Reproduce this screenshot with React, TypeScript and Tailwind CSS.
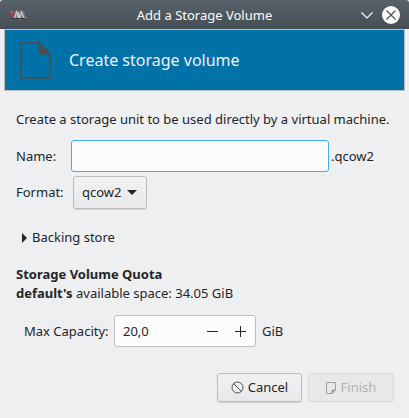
import { useState } from "react";

function AppLogo() {
  return (
    <svg className="h-3 w-5" viewBox="0 0 20 12" fill="none" aria-hidden="true">
      <path d="M2 2H16L18 9H4Z" fill="#85888a" opacity="0.6" />
      <path d="M1 2.5L4 8.5L7 2.5" stroke="#963b50" strokeWidth="2" />
      <path d="M6.5 9L8.5 3L10.5 9M10 3L12 9L13.5 3L16 9" stroke="#c5c4c4" strokeWidth="1.4" />
      <path d="M3 9.5H19" stroke="#35383b" strokeWidth="1" />
      <path d="M17 9H19" stroke="#9a9c9e" strokeWidth="1" />
    </svg>
  );
}

function TitleBar() {
  return (
    <header className="grid h-[29px] grid-cols-[1fr_auto_1fr] items-center rounded-t-[3px] bg-linear-to-b from-[#58626a] to-[#464e55] px-2 text-[#fcfcfc]">
      <AppLogo />
      <h1 className="leading-5">Add a Storage Volume</h1>
      <div className="flex items-center justify-end gap-[6px] pr-px">
        <button type="button" aria-label="Shade window" className="flex size-[18px] items-center justify-center">
          <svg className="size-[18px]" viewBox="0 0 18 18" fill="none" stroke="#fcfcfc" aria-hidden="true">
            <path d="M3.5 6.5L9 12L14.5 6.5" strokeWidth="1.2" />
          </svg>
        </button>
        <button type="button" aria-label="Close window" className="size-[18px]">
          <svg className="size-[18px]" viewBox="0 0 18 18" fill="none" aria-hidden="true">
            <circle cx="9" cy="9" r="9" fill="#fcfcfc" />
            <path d="M4.5 4.5L13.5 13.5M13.5 4.5L4.5 13.5" stroke="#4b545b" strokeWidth="1.2" />
          </svg>
        </button>
      </div>
    </header>
  );
}

function Banner() {
  return (
    <div className="mx-1 flex h-[62px] items-center gap-[18px] border border-[#bcbec3] bg-[#0072a8] pl-[15px]">
      <svg className="h-[37px] w-[31px]" viewBox="0 0 31 37" aria-hidden="true">
        <path d="M1 1H19L30 12V36H1Z" fill="none" stroke="#4d4d4d" strokeWidth="1.5" />
        <path d="M18.5 1L30.5 12.5H18.5Z" fill="#4d4d4d" />
      </svg>
      <h2 className="text-[16px] leading-6 text-[#eff0f1]">Create storage volume</h2>
    </div>
  );
}

export default function App() {
  const [name, setName] = useState("");
  const [capacity, setCapacity] = useState(20);
  const capacityText = capacity.toFixed(1).replace(".", ",");

  return (
    <main className="min-h-screen bg-[#eeeff1] font-['Noto_Sans',sans-serif] text-[13px] leading-[19px] text-[#232629]">
      <TitleBar />
      <Banner />
      <form className="pt-[19px] pr-[15px] pb-[15px] pl-4" onSubmit={(e) => e.preventDefault()}>
        <p>Create a storage unit to be used directly by a virtual machine.</p>

        <div className="mt-[11px] flex items-center">
          <label htmlFor="name" className="w-[55px]">Name:</label>
          <input
            id="name"
            type="text"
            value={name}
            onChange={(e) => setName(e.target.value)}
            className="h-8 min-w-0 flex-1 rounded-[3px] border border-[#3daee9] bg-[#fcfcfc] px-2 outline-none"
          />
          <span className="w-[65px] pl-[2px]">.qcow2</span>
        </div>

        <div className="mt-1 flex items-center">
          <label htmlFor="format" className="w-[57px]">Format:</label>
          <div className="relative">
            <select
              id="format"
              defaultValue="qcow2"
              className="block h-[33px] w-[74px] appearance-none rounded-[3px] border border-[#bcbec0] bg-linear-to-b from-[#f1f1f2] to-[#e8e9ea] pl-2 shadow-[0_1px_1px_#00000022]"
            >
              <option>qcow2</option>
              <option>raw</option>
            </select>
            <svg className="pointer-events-none absolute top-[14px] right-[10px] h-[5px] w-[10px]" viewBox="0 0 10 5" aria-hidden="true">
              <path d="M0 0H10L5 5Z" fill="#232629" />
            </svg>
          </div>
        </div>

        <button type="button" aria-expanded="false" className="mt-[19px] flex items-center gap-[5px] pl-[6px]">
          <svg className="h-[10px] w-[5px]" viewBox="0 0 5 10" aria-hidden="true">
            <path d="M0 0L5 5L0 10Z" fill="#232629" />
          </svg>
          Backing store
        </button>

        <section className="mt-[18px]">
          <h3 className="font-bold">Storage Volume Quota</h3>
          <p>
            <strong>default's</strong> available space: 34.05 GiB
          </p>
        </section>

        <div className="mt-3 flex items-center pl-2">
          <label htmlFor="capacity" className="w-[90px]">Max Capacity:</label>
          <div className="flex h-8 w-[142px] items-center rounded-[3px] border border-[#bcbec0] bg-[#fcfcfc]">
            <input
              id="capacity"
              type="text"
              inputMode="decimal"
              value={capacityText}
              onChange={(e) => setCapacity(Number(e.target.value.replace(",", ".")) || 0)}
              className="min-w-0 flex-1 bg-transparent pl-2 outline-none"
            />
            <div className="flex h-full pr-px">
              <button type="button" aria-label="Decrease" onClick={() => setCapacity(capacity - 1)} className="flex h-full w-7 items-center justify-center">
                <svg className="size-[11px]" viewBox="0 0 11 11" stroke="#232629" aria-hidden="true">
                  <path d="M0 5.5H11" />
                </svg>
              </button>
              <button type="button" aria-label="Increase" onClick={() => setCapacity(capacity + 1)} className="flex h-full w-7 items-center justify-center">
                <svg className="size-[11px]" viewBox="0 0 11 11" stroke="#232629" aria-hidden="true">
                  <path d="M0 5.5H11M5.5 0V11" />
                </svg>
              </button>
            </div>
          </div>
          <span className="pl-[6px]">GiB</span>
        </div>

        <div className="mt-[26px] flex justify-end gap-[6px]">
          <button type="button" className="flex h-[29px] w-[85px] items-center justify-center gap-1 rounded-[3px] border border-[#bcbec0] bg-linear-to-b from-[#f1f1f2] to-[#e8e9ea] shadow-[0_1px_1px_#00000022]">
            <svg className="size-[13px]" viewBox="0 0 13 13" fill="none" stroke="#4d4d4d" aria-hidden="true">
              <circle cx="6.5" cy="6.5" r="5.5" strokeWidth="1" />
              <path d="M2.5 2.5L10.5 10.5" strokeWidth="1" />
            </svg>
            Cancel
          </button>
          <button type="submit" disabled className="flex h-[29px] w-[86px] items-center justify-center gap-[5px] rounded-[3px] border border-[#d6d8da] bg-[#e7e8ea] text-[#b1b3b5]">
            <svg className="h-[12px] w-[10px]" viewBox="0 0 10 12" fill="none" stroke="#a0a1a3" aria-hidden="true">
              <path d="M0.5 0.5H9.5V8L6 11.5H0.5Z" />
              <path d="M6 11.5V8H9.5Z" fill="#a0a1a3" />
            </svg>
            Finish
          </button>
        </div>
      </form>
    </main>
  );
}
